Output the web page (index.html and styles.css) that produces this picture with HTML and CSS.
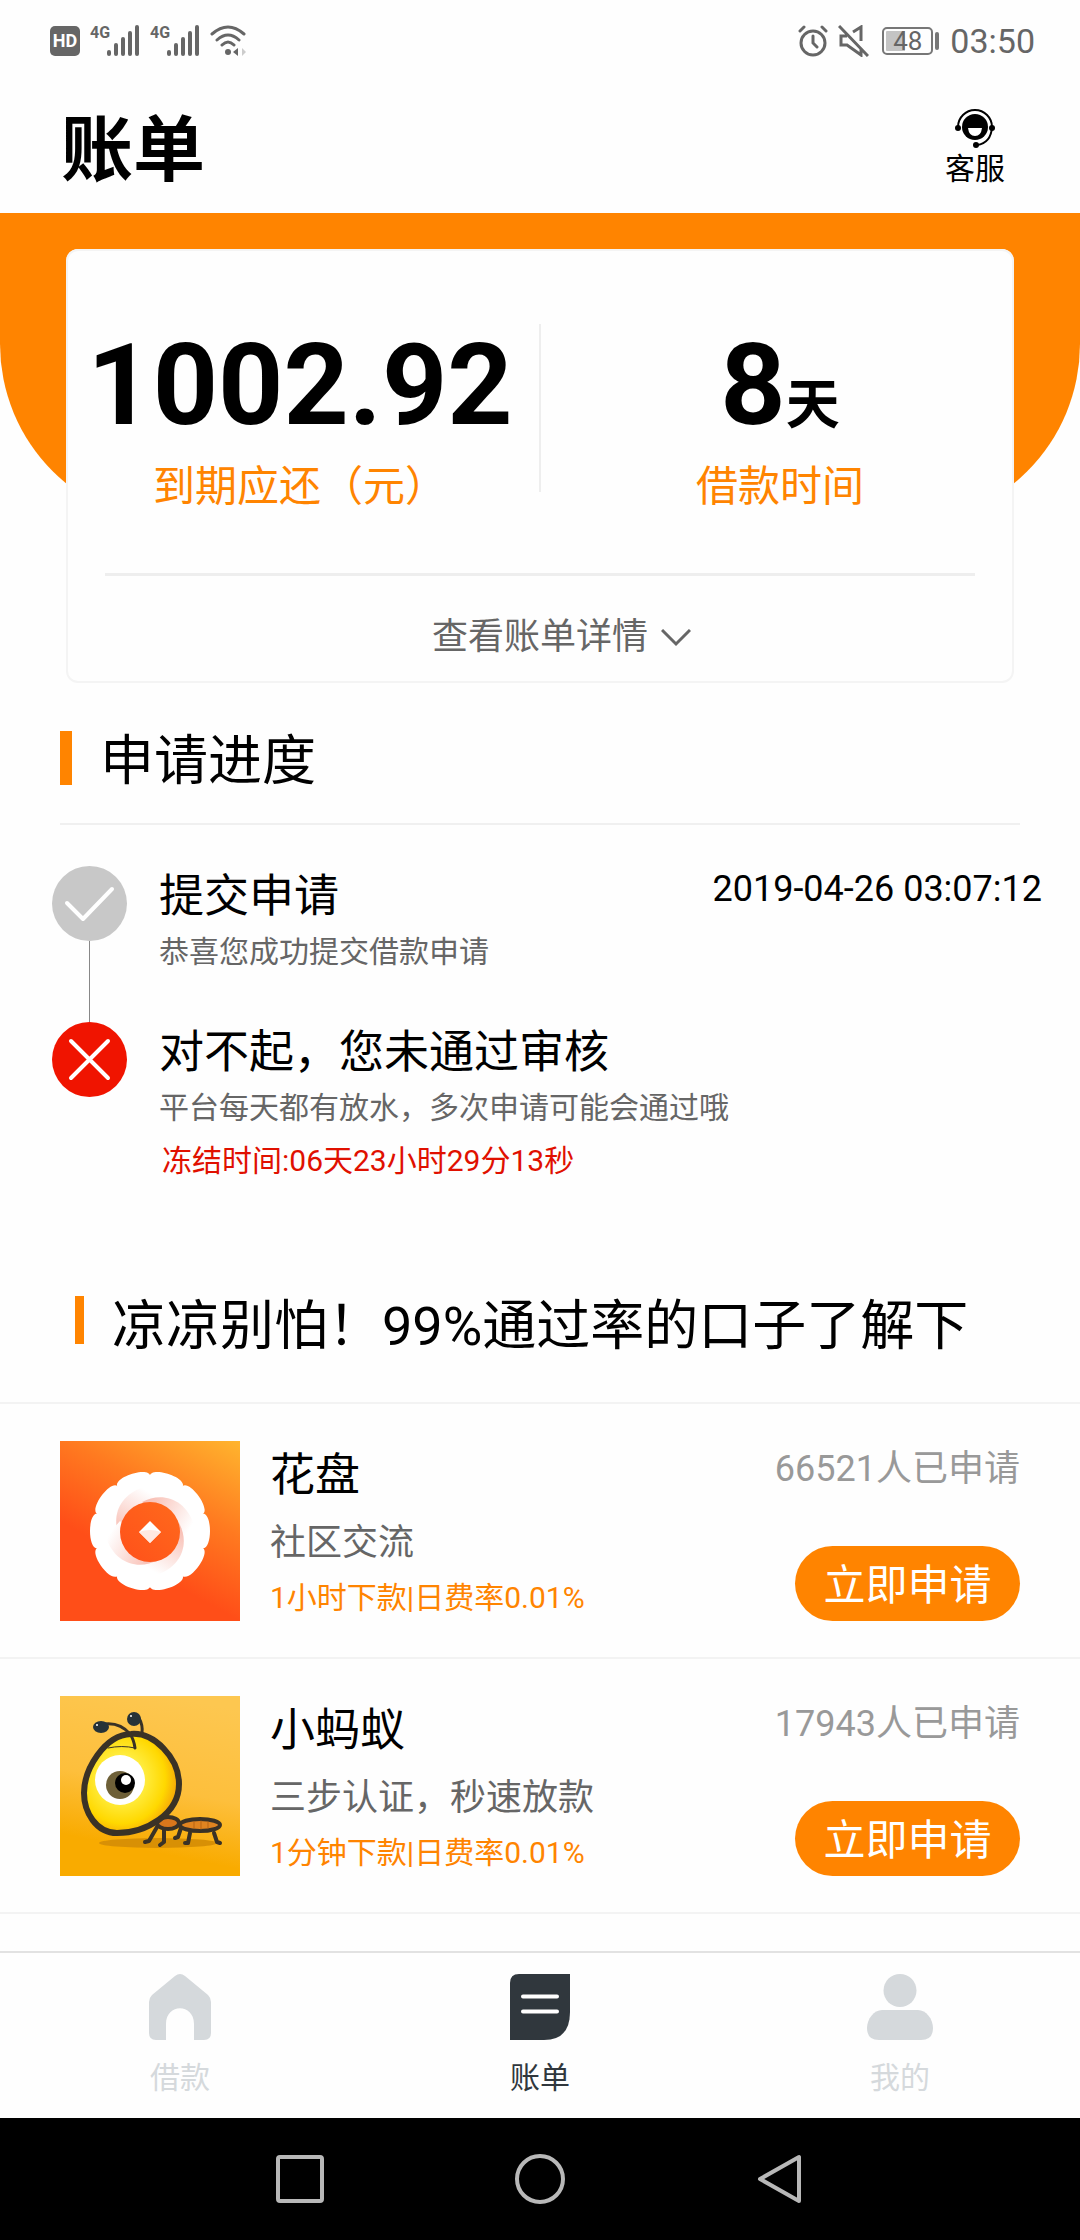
FILE: index.html
```html
<!DOCTYPE html>
<html lang="zh-CN">
<head>
	<meta charset="utf-8" />
	<meta name="viewport" content="width=device-width, initial-scale=1.0, user-scalable=no" />
	<title>账单</title>
	<link rel="stylesheet" href="styles.css">
</head>
<body>
	<div class="statusBar">
		<div class="statusLeft">
			<span class="hd">HD</span>
			<span class="signal">
				<span class="net">4G</span>
				<svg width="33" height="31" viewBox="0 0 33 31" fill="#666"><rect x="0" y="25" width="4" height="6" rx="2"/><rect x="7" y="18" width="4" height="13" rx="2"/><rect x="14" y="12" width="4" height="19" rx="2"/><rect x="21" y="6" width="4" height="25" rx="2"/><rect x="28" y="0" width="4" height="31" rx="2"/></svg>
			</span>
			<span class="signal">
				<span class="net">4G</span>
				<svg width="33" height="31" viewBox="0 0 33 31" fill="#666"><rect x="0" y="25" width="4" height="6" rx="2"/><rect x="7" y="18" width="4" height="13" rx="2"/><rect x="14" y="12" width="4" height="19" rx="2"/><rect x="21" y="6" width="4" height="25" rx="2"/><rect x="28" y="0" width="4" height="31" rx="2"/></svg>
			</span>
			<svg class="wifi" width="37" height="31" viewBox="0 0 37 31" fill="none" stroke="#666" stroke-width="3" stroke-linecap="round"><path d="M2 9Q18-5 34 9M7 15Q18 5 29 15M12 20Q18 14 24 20"/><circle cx="18" cy="27" r="3" fill="#666" stroke="none"/><path d="M28 23v8l-5-4z" fill="#666" stroke="none"/><path d="M32 23v8l4-4z" fill="#ccc" stroke="none"/></svg>
		</div>
		<div class="statusRight">
			<svg width="30" height="32" viewBox="0 0 30 32" fill="none" stroke="#666" stroke-width="3" stroke-linecap="round"><circle cx="15" cy="18" r="12"/><path d="M15 11v7l4 4M2 6l4-4M28 6l-4-4"/></svg>
			<svg class="mute" width="31" height="32" viewBox="0 0 31 32" fill="none" stroke="#666" stroke-width="3"><path d="M1 1l29 30M9 11H3v9h6l14 10v-6M15 7l8-5v14"/></svg>
			<span class="battery"><span class="batteryNum">48</span></span>
			<span class="batteryCap"></span>
			<span class="time">03:50</span>
		</div>
	</div>

	<header class="header">
		<h1 class="pageTitle">账单</h1>
		<a class="service" href="#">
			<svg width="42" height="42" viewBox="0 0 42 42"><path d="M4 20A17 17 0 0 1 38 20Q37 36 23 38" fill="none" stroke="#000" stroke-width="2"/><circle cx="21" cy="20" r="13"/><circle cx="4" cy="21" r="3"/><circle cx="38" cy="21" r="3"/><circle cx="22" cy="38" r="3"/><path d="M14 21h14q-1 8-7 8t-7-8z" fill="#fff"/></svg>
			<span>客服</span>
		</a>
	</header>

	<main class="main">
		<section class="hero">
			<div class="card">
				<div class="stats">
					<div class="stat">
						<p class="num">1002.92</p>
						<p class="label">到期应还（元）</p>
					</div>
					<div class="divider"></div>
					<div class="stat">
						<p class="num">8<span class="unit">天</span></p>
						<p class="label">借款时间</p>
					</div>
				</div>
				<button class="detail" type="button">
					<span>查看账单详情</span>
					<svg width="30" height="18" viewBox="0 0 30 18" fill="none" stroke="#666" stroke-width="3"><path d="M1 1l14 14L29 1"/></svg>
				</button>
			</div>
		</section>

		<section class="progress">
			<h2 class="progressTitle">申请进度</h2>
			<ol class="steps">
				<li class="step">
					<div class="track">
						<svg width="75" height="75" viewBox="0 0 75 75" fill="none" stroke="#fff" stroke-width="4" stroke-linecap="round" stroke-linejoin="round"><circle cx="37.500" cy="37.500" r="37.500" fill="#c8c8c8" stroke="none"/><path d="M15 37l16 16 29-30"/></svg>
						<i class="line"></i>
					</div>
					<div class="stepText">
						<h3>提交申请</h3>
						<p class="sub">恭喜您成功提交借款申请</p>
					</div>
					<time class="date">2019-04-26 03:07:12</time>
				</li>
				<li class="step">
					<div class="track">
						<svg width="75" height="75" viewBox="0 0 75 75" fill="none" stroke="#fff" stroke-width="4" stroke-linecap="round"><circle cx="37.500" cy="37.500" r="37.500" fill="#f01400" stroke="none"/><path d="M19 19l37 37M56 19L19 56"/></svg>
					</div>
					<div class="stepText">
						<h3>对不起，您未通过审核</h3>
						<p class="sub">平台每天都有放水，多次申请可能会通过哦</p>
						<p class="freeze">冻结时间:06天23小时29分13秒</p>
					</div>
				</li>
			</ol>
		</section>

		<section class="recommend">
			<h2 class="recommendTitle">凉凉别怕！99%通过率的口子了解下</h2>
			<ul class="list">
				<li class="item">
					<svg class="logo" width="180" height="180" viewBox="0 0 180 180">
						<defs>
							<linearGradient id="flowerBg" x1="1" y1="0" x2="0.500" y2="0.900"><stop offset="0" stop-color="#ffb52e"/><stop offset="0.450" stop-color="#ff7a20"/><stop offset="0.850" stop-color="#ff4e18"/></linearGradient>
							<linearGradient id="swirl" gradientUnits="userSpaceOnUse" x1="58" y1="92" x2="84" y2="48"><stop offset="0" stop-color="#f8bdb2"/><stop offset="1" stop-color="#fff"/></linearGradient>
							<linearGradient id="coin" x1="1" y1="0" x2="0" y2="1"><stop offset="0" stop-color="#ff6a1c"/><stop offset="1" stop-color="#ff501a"/></linearGradient>
							<path id="petal" d="M90 90L141 107C153 112 153 68 141 73z"/>
							<path id="crescent" d="M61 98C50 78 58 54 84 46L100 60L80 80z"/>
						</defs>
						<rect width="180" height="180" fill="url(#flowerBg)"/>
						<g fill="#fff">
							<circle cx="90" cy="90" r="52"/>
							<use href="#petal"/><use href="#petal" transform="rotate(36 90 90)"/><use href="#petal" transform="rotate(72 90 90)"/><use href="#petal" transform="rotate(108 90 90)"/><use href="#petal" transform="rotate(144 90 90)"/><use href="#petal" transform="rotate(180 90 90)"/><use href="#petal" transform="rotate(216 90 90)"/><use href="#petal" transform="rotate(252 90 90)"/><use href="#petal" transform="rotate(288 90 90)"/><use href="#petal" transform="rotate(324 90 90)"/>
						</g>
						<g fill="url(#swirl)">
							<use href="#crescent"/><use href="#crescent" transform="rotate(90 90 90)"/><use href="#crescent" transform="rotate(180 90 90)"/><use href="#crescent" transform="rotate(270 90 90)"/>
						</g>
						<circle cx="90" cy="91" r="30" fill="url(#coin)"/>
						<path d="M90 80l11 11-11 11-11-11z" fill="#fff"/>
						<path d="M79 91q11-4 22 0l-11 11z" fill="#ffe9e2"/>
					</svg>
					<div class="info">
						<h3>花盘</h3>
						<p class="desc">社区交流</p>
						<p class="rate">1小时下款|日费率0.01%</p>
					</div>
					<div class="action">
						<span class="count">66521人已申请</span>
						<button class="apply" type="button">立即申请</button>
					</div>
				</li>
				<li class="item">
					<svg class="logo" width="180" height="180" viewBox="0 0 180 180">
						<defs>
							<linearGradient id="antBg" x1="0.600" y1="0" x2="0.400" y2="1"><stop offset="0" stop-color="#fdc750"/><stop offset="0.500" stop-color="#fdbf3c"/><stop offset="0.850" stop-color="#f9ab00"/></linearGradient>
							<radialGradient id="head" cx="0.400" cy="0.450" r="0.650"><stop offset="0.300" stop-color="#fff04a"/><stop offset="0.700" stop-color="#ffd800"/><stop offset="1" stop-color="#f2900c"/></radialGradient>
						</defs>
						<rect width="180" height="180" fill="url(#antBg)"/>
						<ellipse cx="98" cy="147" rx="59" ry="5" fill="#d89005"/>
						<g fill="none" stroke="#3a3226" stroke-width="4" stroke-linecap="round" stroke-linejoin="round">
							<path d="M97 131l-8 14-4 1M104 132l0 14-4 3M121 132l-3 9-3 1M130 137l-2 10-3 0M154 137l3 9 3 1"/>
							<ellipse cx="108" cy="127" rx="11" ry="6" fill="#d9771c"/>
							<ellipse cx="140" cy="129" rx="20" ry="6" fill="#e08420"/>
							<path d="M134 126v6M141 125v8M148 126v6" stroke="#b96412" stroke-width="1"/>
							<path d="M71 38C94 36 119 62 119 88C119 118 86 137 57 137C36 137 24 116 24 97C24 74 44 39 71 38z" fill="url(#head)" stroke-width="6"/>
							<path d="M44 28Q60 26 70 38Q74 44 75 52M79 22Q83 29 82 37" stroke-width="3"/>
							<path d="M48 52Q62 49 75 52" stroke-width="1"/>
						</g>
						<ellipse cx="41" cy="31" rx="8" ry="6" fill="#263238"/>
						<circle cx="74" cy="23" r="7" fill="#263238"/>
						<circle cx="37" cy="29" r="1" fill="#fff"/><circle cx="71" cy="20" r="1" fill="#fff"/>
						<circle cx="60" cy="84" r="25" fill="#fff"/>
						<circle cx="60" cy="89" r="14" fill="#6e6038"/>
						<ellipse cx="65" cy="87" rx="10" ry="10" fill="#000"/>
						<circle cx="66" cy="84" r="5" fill="#fff"/>
					</svg>
					<div class="info">
						<h3>小蚂蚁</h3>
						<p class="desc">三步认证，秒速放款</p>
						<p class="rate">1分钟下款|日费率0.01%</p>
					</div>
					<div class="action">
						<span class="count">17943人已申请</span>
						<button class="apply" type="button">立即申请</button>
					</div>
				</li>
			</ul>
		</section>
	</main>

	<nav class="tabBar">
		<a class="tab" href="#">
			<svg width="62" height="66" viewBox="0 0 62 66" fill="#d5d9dc"><path d="M26 2Q31-2 36 2L59 21Q62 24 62 28V59Q62 66 55 66H45V50C45 29 17 29 17 50V66H7Q0 66 0 59V28Q0 24 3 21z"/></svg>
			<span>借款</span>
		</a>
		<a class="tab active" href="#">
			<svg width="60" height="66" viewBox="0 0 60 66"><path d="M9 0H60V38Q60 66 34 66H0V9Q0 0 9 0z" fill="#30373d"/><path d="M13 22.500H47M13 37.500H47" stroke="#fff" stroke-width="4" stroke-linecap="round"/></svg>
			<span>账单</span>
		</a>
		<a class="tab" href="#">
			<svg width="66" height="66" viewBox="0 0 66 66" fill="#d5d9dc"><circle cx="33" cy="16.500" r="16.500"/><path d="M15 36H51C59 36 66 45 66 54Q66 66 54 66H12Q0 66 0 54C0 45 7 36 15 36z"/></svg>
			<span>我的</span>
		</a>
	</nav>

	<div class="sysNav">
		<button type="button" aria-label="最近任务"><svg width="52" height="52" viewBox="0 0 52 52"><rect x="4" y="4" width="44" height="44" rx="2"/></svg></button>
		<button type="button" aria-label="主屏幕"><svg width="52" height="52" viewBox="0 0 52 52"><circle cx="26" cy="26" r="23"/></svg></button>
		<button type="button" aria-label="返回"><svg width="52" height="52" viewBox="0 0 52 52"><path d="M45 4V48L6 26z"/></svg></button>
	</div>
</body>
</html>
```

FILE: styles.css
```css
*{
	margin: 0;
	padding: 0;
	box-sizing: border-box;
}
body{
	min-height: 100vh;
	display: flex;
	flex-direction: column;
	background: #fefefe;
	color: #000;
	font-family: Roboto, "Noto Sans CJK SC", sans-serif;
}
h1, h2, h3{
	font-weight: normal;
}
ul, ol{
	list-style: none;
}
a{
	color: inherit;
	text-decoration: none;
}
button{
	border: 0;
	background: none;
	font-family: inherit;
}
svg{
	display: block;
	flex: none;
}

/* 状态栏 */
.statusBar{
	height: 81px;
	padding: 0 45px 0 50px;
	display: flex;
	justify-content: space-between;
	align-items: center;
	color: #666;
}
.statusLeft, .statusRight{
	display: flex;
	align-items: center;
}
.statusLeft{
	gap: 10px;
}
.hd{
	width: 30px;
	height: 30px;
	line-height: 30px;
	border-radius: 5px;
	background: #666;
	color: #fff;
	font-size: 18px;
	font-weight: bold;
	text-align: center;
}
.signal{
	display: flex;
	align-items: flex-start;
}
.net{
	font-size: 16px;
	line-height: 16px;
	width: 17px;
	font-family: "Liberation Sans Narrow", Roboto, sans-serif;
	font-weight: bold;
}
.mute{
	margin-left: 10px;
}
.battery{
	width: 51px;
	height: 28px;
	margin-left: 13px;
	padding: 2px;
	border: 2px solid #777;
	border-radius: 5px;
	background: linear-gradient(to right, #c4c4c4 45%, transparent 45%) content-box;
}
.batteryNum{
	display: block;
	font-size: 26px;
	line-height: 20px;
	text-align: center;
}
.batteryCap{
	width: 4px;
	height: 18px;
	margin-left: 2px;
	border-radius: 2px;
	background: #777;
}
.time{
	margin-left: 11px;
	font-size: 34px;
}

/* 头部 */
.header{
	height: 132px;
	padding: 0 75px 24px 61px;
	display: flex;
	justify-content: space-between;
	align-items: flex-end;
}
.pageTitle{
	font-size: 72px;
	line-height: 76px;
	font-weight: bold;
}
.service{
	display: flex;
	flex-direction: column;
	align-items: center;
	font-size: 30px;
	line-height: 40px;
}

/* 账单卡片 */
.main{
	flex: 1;
}
.hero{
	position: relative;
	padding: 36px 66px 0;
}
.hero::before{
	content: '';
	position: absolute;
	top: 0;
	left: 0;
	width: 100%;
	height: 311px;
	background: #ff8400;
	border-radius: 0 0 180px 180px;
}
.card{
	position: relative;
	padding: 75px 39px 0;
	background: #fefefe;
	border-radius: 12px;
	box-shadow: inset 0 0 0 2px #f4f4f4;
}
.stats{
	margin: 0 -39px;
	padding-bottom: 56px;
	display: flex;
	justify-content: space-between;
	gap: 5px;
}
.stat{
	flex: 1;
	padding-top: 3px;
	text-align: center;
}
.divider{
	width: 2px;
	height: 168px;
	background: #eee;
}
.num{
	font-size: 114px;
	line-height: 116px;
	font-weight: bold;
}
.unit{
	font-size: 54px;
	line-height: 1;
}
.label{
	margin-top: 14px;
	font-size: 42px;
	line-height: 60px;
	color: #ff8400;
}
.detail{
	width: 100%;
	padding: 37px 0 21px;
	border-top: 3px solid #eee;
	display: grid;
	grid-template-columns: 1fr auto 1fr;
	align-items: center;
	font-size: 36px;
	line-height: 49px;
	color: #666;
}
.detail span{
	grid-column: 2;
}
.detail svg{
	margin-left: 13px;
}

/* 申请进度 */
.progressTitle, .recommendTitle{
	display: flex;
	gap: 28px;
	font-size: 54px;
	line-height: 62px;
}
.progressTitle{
	margin: 48px 60px 0;
	padding-bottom: 30px;
	border-bottom: 2px solid #f0f0f0;
}
.progressTitle::before{
	content: '';
	width: 12px;
	height: 54px;
	background: #ff8400;
}
.steps{
	padding: 41px 38px 0 52px;
}
.step{
	display: flex;
}
.step:first-child{
	min-height: 156px;
}
.track{
	margin-right: 32px;
	display: flex;
	flex-direction: column;
	align-items: center;
}
.line{
	flex: 1;
	width: 1px;
	background: #888;
}
.stepText{
	flex: 1;
}
.step h3{
	font-size: 45px;
	line-height: 62px;
}
.sub, .freeze{
	font-size: 30px;
	line-height: 48px;
	color: #666;
}
.freeze{
	margin-top: 5px;
	padding-left: 3px;
	color: #e01000;
}
.date{
	font-size: 36px;
	line-height: 46px;
}

/* 推荐列表 */
.recommendTitle{
	margin-top: 111px;
	padding: 0 60px 44px 75px;
	border-bottom: 2px solid #f3f3f3;
}
.recommendTitle::before{
	content: '';
	width: 9px;
	height: 48px;
	background: #ff8400;
}
.item{
	padding: 37px 60px 36px;
	border-bottom: 2px solid #f3f3f3;
	display: flex;
}
.info{
	flex: 1;
	margin-left: 30px;
	padding-top: 8px;
}
.info h3{
	font-size: 45px;
	line-height: 54px;
}
.desc{
	margin-top: 16px;
	font-size: 36px;
	line-height: 48px;
	color: #666;
}
.rate{
	margin-top: 10px;
	font-size: 30px;
	line-height: 42px;
	color: #ff8400;
}
.action{
	padding-top: 4px;
	display: flex;
	flex-direction: column;
	justify-content: space-between;
	align-items: flex-end;
}
.count{
	font-size: 36px;
	line-height: 48px;
	color: #999;
}
.apply{
	width: 225px;
	height: 75px;
	padding-top: 4px;
	border-radius: 38px;
	background: #ff8400;
	color: #fff;
	font-size: 42px;
	line-height: 71px;
}

/* 底部导航 */
.tabBar{
	border-top: 2px solid #e2e2e2;
	display: flex;
}
.tab{
	flex: 1;
	padding: 21px 0 20px;
	display: flex;
	flex-direction: column;
	align-items: center;
	gap: 18px;
	font-size: 30px;
	line-height: 40px;
	color: #d5d9dc;
}
.active{
	color: #30373d;
}
.sysNav{
	height: 122px;
	background: #000;
	display: flex;
	justify-content: center;
	align-items: center;
	gap: 188px;
}
.sysNav svg{
	fill: none;
	stroke: #b8b8b8;
	stroke-width: 4;
	stroke-linejoin: round;
}
```
